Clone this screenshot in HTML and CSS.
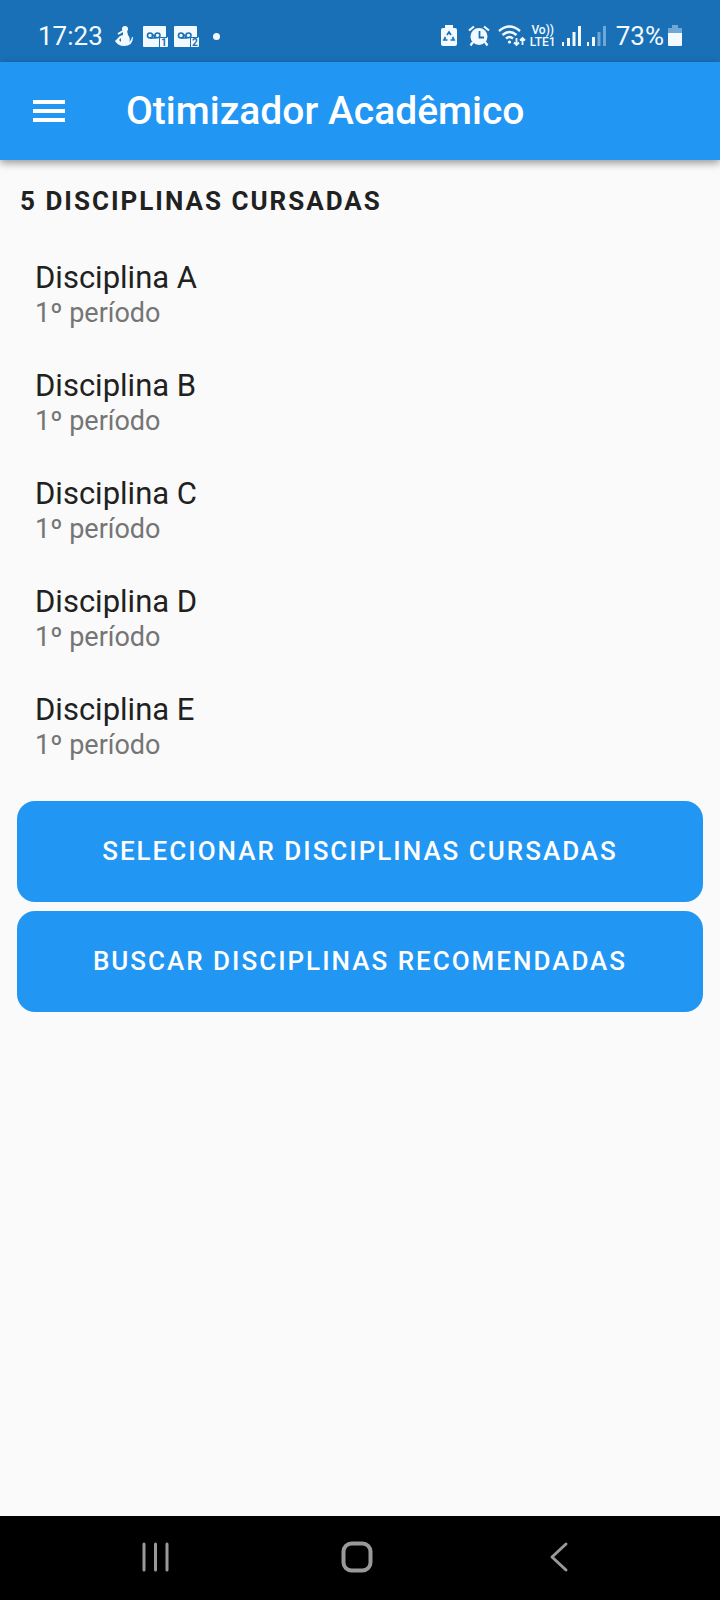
FILE: index.html
```html
<!DOCTYPE html>
<html lang="pt-BR">
<head>
<meta charset="utf-8">
<meta name="viewport" content="width=device-width, initial-scale=1">
<title>Otimizador Acadêmico</title>
<link rel="stylesheet" href="styles.css">
</head>
<body>
<div class="app">
  <div class="status">
    <div class="status-group">
      <time class="status-text">17:23</time>
      <svg class="icon-first" width="18" height="20" viewBox="0 0 18 20" fill="#f2faff" aria-hidden="true">
        <circle cx="10" cy="3" r="3"/>
        <path d="M8 5h4l1 4q3 4 1 7l2-2 1-3h1q0 9-9 9-6 0-9-5l5-5 3-1z"/>
        <path d="M3 8l5-3" stroke="#f2faff" stroke-width="2"/>
        <path d="M6 12l-2 2 2 2z" fill="#1a70b7"/>
      </svg>
      <svg width="25" height="21" viewBox="0 0 25 21" aria-hidden="true">
        <path d="M1 0h21q1 0 1 1v10h1q1 0 1 1v8q0 1-1 1H1q-1 0-1-1V1q0-1 1-1z" fill="#f2faff"/>
        <g fill="none" stroke="#1a70b7" stroke-width="1.600"><circle cx="7" cy="9.500" r="2.500"/><path d="M7 12h5V9.500a2.500 2.500 0 0 1 5 0c0 3-5 3.500-7-1"/><path stroke-width="1" d="M16.500 21V11.500H24"/></g>
        <text class="sim" x="18" y="20">1</text>
      </svg>
      <svg width="25" height="21" viewBox="0 0 25 21" aria-hidden="true">
        <path d="M1 0h21q1 0 1 1v10h1q1 0 1 1v8q0 1-1 1H1q-1 0-1-1V1q0-1 1-1z" fill="#f2faff"/>
        <g fill="none" stroke="#1a70b7" stroke-width="1.600"><circle cx="7" cy="9.500" r="2.500"/><path d="M7 12h5V9.500a2.500 2.500 0 0 1 5 0c0 3-5 3.500-7-1"/><path stroke-width="1" d="M16.500 21V11.500H24"/></g>
        <text class="sim" x="18" y="20">2</text>
      </svg>
      <span class="dot"></span>
    </div>
    <div class="status-group">
      <svg width="16" height="22" viewBox="0 0 16 22" aria-hidden="true">
        <path d="M4 3V0h8v3h2q2 0 2 2v14q0 2-2 2H2q-2 0-2-2V5q0-2 2-2z" fill="#f2faff"/>
        <path d="M6 10l2-3 2 3M11.500 12l1.500 3h-3.500M6.500 15H3l1.500-3" fill="none" stroke="#1a70b7" stroke-width="1.700"/>
      </svg>
      <svg class="alarm" width="22" height="22" viewBox="0 0 22 22" aria-hidden="true">
        <circle cx="11" cy="11.500" r="8.500" fill="#f2faff"/>
        <path d="M1 5.500l5-4M21 5.500l-5-4M5 17l-2.500 3.500M17 17l2.500 3.500" stroke="#f2faff" stroke-width="2.200"/>
        <path d="M11.500 6v6.500H16" fill="none" stroke="#1a70b7" stroke-width="1.800"/>
      </svg>
      <svg width="28" height="22" viewBox="0 0 28 22" fill="none" stroke="#f2faff" stroke-width="2.400" aria-hidden="true">
        <path d="M1 6q10.500-9 21 0M4.500 10q7-6 14 0M8 13.500q3.500-3 7 0"/>
        <circle cx="11.500" cy="17" r="1.600" fill="#f2faff" stroke="none"/>
        <path d="M18.500 13v7M16 17.500l2.500 2.500 2.500-2.500M24.500 20v-7M22 15.500l2.500-2.500 2.500 2.500" stroke-width="1.800"/>
      </svg>
      <span class="volte"><span>Vo))</span><span>LTE1</span></span>
      <svg width="19" height="20" viewBox="0 0 19 20" fill="#f2faff" aria-hidden="true"><path d="M0 16h2v4H0zM5 12h3v8H5zM10.500 6h3v14h-3zM16 0h3v20h-3z"/></svg>
      <svg width="19" height="20" viewBox="0 0 19 20" fill="#f2faff" aria-hidden="true"><path d="M0 16h2v4H0zM5 11h3v9H5z"/><path opacity=".4" d="M10.500 6h3v14h-3zM16 0h3v20h-3z"/></svg>
      <span class="status-text percent">73%</span>
      <svg class="battery" width="14" height="22" viewBox="0 0 14 22" fill="#f2faff" aria-hidden="true"><path opacity=".4" d="M0 8V3h4V0h6v3h4v5z"/><path d="M0 8h14v12q0 1-1 1H1q-1 0-1-1z"/></svg>
    </div>
  </div>
  <header class="appbar">
    <button class="menu" type="button" aria-label="Menu"><svg width="32" height="22" viewBox="0 0 32 22" fill="#fff" aria-hidden="true"><path d="M0 0h32v4H0zM0 9h32v4H0zM0 18h32v4H0z"/></svg></button>
    <h1 class="title">Otimizador Acadêmico</h1>
  </header>
  <main class="content">
    <h2 class="heading">5 DISCIPLINAS CURSADAS</h2>
    <ul class="list">
      <li class="item"><span class="name">Disciplina A</span><span class="period">1º período</span></li>
      <li class="item"><span class="name">Disciplina B</span><span class="period">1º período</span></li>
      <li class="item"><span class="name">Disciplina C</span><span class="period">1º período</span></li>
      <li class="item"><span class="name">Disciplina D</span><span class="period">1º período</span></li>
      <li class="item"><span class="name">Disciplina E</span><span class="period">1º período</span></li>
    </ul>
    <div class="actions">
      <button class="action" type="button">SELECIONAR DISCIPLINAS CURSADAS</button>
      <button class="action" type="button">BUSCAR DISCIPLINAS RECOMENDADAS</button>
    </div>
  </main>
  <nav class="navbar" aria-label="Sistema">
    <button class="nav-button" type="button" aria-label="Recentes"><svg width="32" height="32" viewBox="0 0 32 32"><path d="M5 3v26M16.500 3v26M28 3v26"/></svg></button>
    <button class="nav-button" type="button" aria-label="Início"><svg width="32" height="32" viewBox="0 0 32 32"><rect x="2.500" y="2.500" width="27" height="27" rx="8"/></svg></button>
    <button class="nav-button" type="button" aria-label="Voltar"><svg width="32" height="32" viewBox="0 0 32 32"><path d="M23 3L9 16l14 13"/></svg></button>
  </nav>
</div>
</body>
</html>
```
FILE: styles.css
```css
* { box-sizing: border-box; }
body { margin: 0; background: #fafafa; color: #212121; font-family: Roboto, "Liberation Sans", sans-serif; }
button { border: 0; padding: 0; background: none; color: inherit; font: inherit; cursor: pointer; }
h1, h2, ul { margin: 0; padding: 0; }
svg { display: block; flex: none; }

.app { min-height: 100vh; display: flex; flex-direction: column; }

.status { display: flex; justify-content: space-between; align-items: center; padding: 13px 38px 3px; height: 62px; background: #1a70b7; color: #f2faff; }
.status-group { display: flex; align-items: center; gap: 6px; }
.status-text { font-size: 26px; line-height: 32px; }
.icon-first { margin: 0 4px 0 6px; }
.sim { font: bold 10px Roboto, sans-serif; fill: #1a70b7; }
.dot { width: 7px; height: 7px; margin-left: 8px; border-radius: 50%; background: #f2faff; }
.alarm { margin: 0 2px 0 5px; }
.volte { display: flex; flex-direction: column; align-items: center; width: 26px; margin-left: -2px; font-size: 12px; font-weight: 500; line-height: 12px; }
.percent { margin-left: 4px; }
.battery { margin-left: -2px; }

.appbar { position: relative; display: flex; align-items: center; gap: 61px; height: 98px; padding: 0 33px; background: #2196f3; color: #fff; box-shadow: 0 3px 8px rgba(0, 0, 0, .4); }
.menu { display: flex; }
.title { font-size: 39px; font-weight: 500; line-height: 48px; }

.content { flex: 1; padding: 24px 17px; }
.heading { padding: 0 3px; font-size: 26px; font-weight: 700; line-height: 34px; letter-spacing: 2px; }
.list { padding-top: 42px; list-style: none; }
.item { display: flex; flex-direction: column; padding: 0 18px 38px; }
.name { font-size: 31px; line-height: 36px; }
.period { font-size: 27px; line-height: 34px; color: #757575; }
.actions { display: flex; flex-direction: column; gap: 9px; padding-top: 1px; }
.action { min-height: 101px; padding-bottom: 2px; border-radius: 18px; background: #2196f3; color: #fff; font-size: 26px; font-weight: 500; line-height: 34px; letter-spacing: 2px; }

.navbar { display: flex; justify-content: space-between; align-items: center; height: 84px; padding: 0 145px 2px 139px; background: #000; }
.nav-button { display: flex; }
.nav-button svg { fill: none; stroke: #999; stroke-width: 3; stroke-linecap: round; stroke-linejoin: round; }
.nav-button rect { stroke-width: 4; }
```
